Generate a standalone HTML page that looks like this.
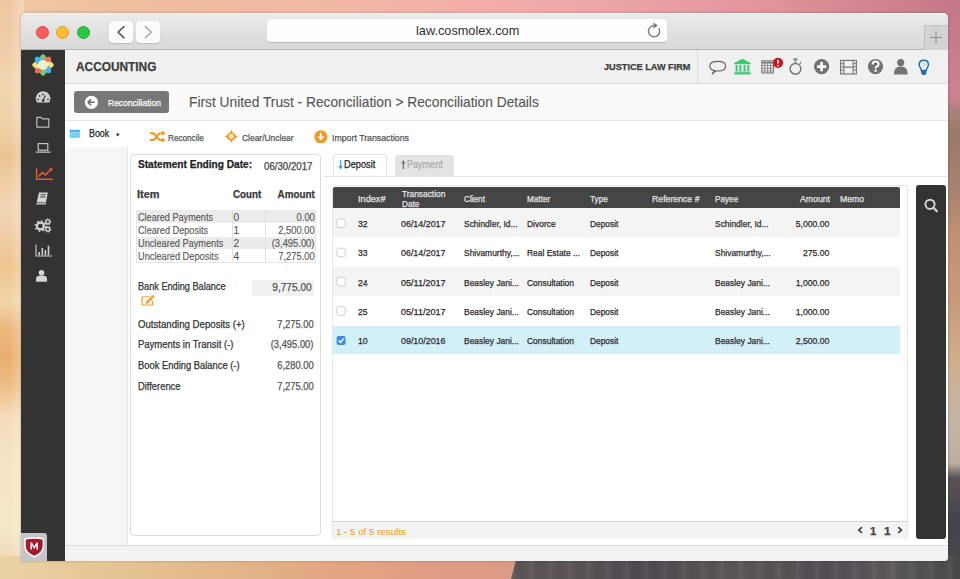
<!DOCTYPE html>
<html><head><meta charset="utf-8">
<style>
*{box-sizing:border-box;margin:0;padding:0}
html,body{width:960px;height:579px;overflow:hidden;font-family:"Liberation Sans",sans-serif;background:#e8b890;position:relative}
.a{position:absolute}
.t{position:absolute;white-space:nowrap;line-height:1;transform-origin:0 0;-webkit-text-stroke:0.25px currentColor}
svg{position:absolute;overflow:visible}
#bgtop{left:0;top:0;width:960px;height:16px;background:linear-gradient(90deg,#eec8a2 0%,#f0bea0 15%,#f2b8a4 35%,#f2aeaa 50%,#eba4a6 65%,#e2949c 80%,#d08290 92%,#c47888 100%)}
#bgleft{left:0;top:0;width:24px;height:579px;background:linear-gradient(90deg,rgba(255,250,235,0) 0%,rgba(255,250,235,0) 40%,rgba(255,250,235,.3) 88%),linear-gradient(180deg,#efc6a2 0%,#f0cca8 8%,#f2d6b0 14%,#f0d2aa 21%,#ecc292 27%,#f2d6b4 35%,#f0ceaa 40%,#eec48e 46%,#f0d4a8 52%,#ecb67c 57%,#eaae70 62%,#eebe88 67%,#f4dcba 72%,#f6e4c6 80%,#f6e6c8 92%,#ead0a2 100%)}
#bgright{left:944px;top:0;width:16px;height:579px;background:linear-gradient(180deg,#c47888 0%,#cc8290 17%,#a88078 19.5%,#9a7a6c 23%,#a88270 33%,#c09070 40%,#c89a78 52%,#d0ae8e 62%,#c6b6a6 72%,#bcaea2 80%,#5a5458 82.5%,#46424a 90%,#4a474c 100%)}
#bgbot{left:0;top:556px;width:960px;height:23px;background:linear-gradient(90deg,#ead2a4 0%,#e6c494 12%,#e2b488 25%,#e2a682 35%,#e09c84 45%,#dc9a86 54%)}
#rock{left:508px;top:556px;width:452px;height:23px;clip-path:polygon(9px 0,452px 0,452px 23px,3px 23px);background:repeating-linear-gradient(90deg,rgba(255,255,255,0) 0px,rgba(255,255,255,.05) 5px,rgba(255,255,255,0) 9px,rgba(0,0,0,.04) 14px,rgba(255,255,255,0) 19px),linear-gradient(90deg,#5c5658 0%,#5a5458 15%,#4e4a50 30%,#5a5658 50%,#524e54 70%,#5c585c 85%,#4a484c 100%)}
#win{left:21px;top:13px;width:927px;height:548px;border-radius:5px 5px 4px 0;overflow:hidden;background:#fff;box-shadow:0 0 3px rgba(0,0,0,.25)}
#pg{left:-21px;top:-13px;width:960px;height:579px}
#tb{left:21px;top:13px;width:927px;height:37px;background:linear-gradient(180deg,#ebebeb 0%,#d8d8d8 100%);border-bottom:1px solid #b6b6b6;box-shadow:inset 0 1px 0 #f6f2f2}
.tl{width:13px;height:13px;border-radius:50%;top:26px}
.nav{top:21px;width:24px;height:22px;background:#fbfbfb;border-radius:4px;box-shadow:0 0.5px 1px rgba(0,0,0,.15)}
#url{left:267px;top:19px;width:400px;height:23px;background:#fdfdfd;border-radius:4px;box-shadow:0 0.5px 1px rgba(0,0,0,.15)}
#plus{left:924px;top:25px;width:24px;height:25px;background:#d3d3d3;border-left:1px solid #bdbdbd;border-top:1px solid #c5c5c5}
#side{left:21px;top:50px;width:44px;height:511px;background:#333333}
#hdr{left:65px;top:50px;width:883px;height:34px;background:#f0f0f0;border-bottom:1px solid #dedede}
#sub{left:65px;top:84px;width:883px;height:37px;background:#fafafa;border-bottom:1px solid #e6e6e6}
#book{left:65px;top:147px;width:63px;height:398px;background:#f6f6f6;border-right:1px solid #e8e8e8}
#sum{left:130px;top:154px;width:191px;height:382px;border:1px solid #dcdcdc;border-radius:4px;background:#fff}
#foot{left:65px;top:545px;width:883px;height:16px;background:#f3f3f3;border-top:1px solid #dadada}
#grid{left:332px;top:185px;width:576px;height:354px;border:1px solid #e6e6e6;border-radius:3px;background:#fff}
#search{left:916px;top:185px;width:30px;height:354px;background:#333;border-radius:3px}
</style></head><body>
<div id="bgright" class="a"></div>
<div id="bgtop" class="a"></div>
<div id="bgleft" class="a"></div>
<div id="bgbot" class="a"></div>
<div id="rock" class="a"></div>
<div id="win" class="a"><div id="pg" class="a">
  <div id="tb" class="a"></div>
  <div class="a tl" style="left:35.5px;background:#fb5d58;border:0.5px solid #e0443f"></div>
  <div class="a tl" style="left:56px;background:#fdbc2f;border:0.5px solid #dea123"></div>
  <div class="a tl" style="left:77px;background:#2dc642;border:0.5px solid #1aab2b"></div>
  <div class="a nav" style="left:109px"></div>
  <div class="a nav" style="left:136px"></div>
  <div id="url" class="a"></div>
  <div id="plus" class="a"></div>
  <div id="side" class="a"></div>
  <div id="hdr" class="a"></div>
  <div id="sub" class="a"></div>
  <div id="book" class="a"></div>
  <div id="sum" class="a"></div>
  <div id="grid" class="a"></div>
  <div id="search" class="a"></div>
  <div id="foot" class="a"></div>

  <div class="a" style="left:74.4px;top:91.4px;width:94.6px;height:21.3px;background:#777777;border-radius:3px"></div>
  <div class="a" style="left:136px;top:210px;width:180.3px;height:53px;border:1px solid #e4e4e4;border-top-color:#ececec"></div>
  <div class="a" style="left:137px;top:210px;width:178.3px;height:13.2px;background:#ebebeb"></div>
  <div class="a" style="left:137px;top:237px;width:178.3px;height:12.4px;background:#ebebeb"></div>
  <div class="a" style="left:232px;top:211px;width:1px;height:51px;background:#e0e0e0"></div>
  <div class="a" style="left:265px;top:211px;width:1px;height:51px;background:#e0e0e0"></div>
  <div class="a" style="left:252px;top:279.6px;width:62.3px;height:16.1px;background:#f1f1f1"></div>
  <div class="a" style="left:324px;top:175.5px;width:624px;height:1px;background:#e2e2e2"></div>
  <div class="a" style="left:332.6px;top:154.1px;width:54.4px;height:22.4px;background:#fff;border:1px solid #e2e2e2;border-bottom:0;border-radius:3px 3px 0 0"></div>
  <div class="a" style="left:394.7px;top:154.6px;width:59.3px;height:21px;background:#e3e3e3;border-radius:3px 3px 0 0"></div>
  <div class="a" style="left:333px;top:186.7px;width:567px;height:21.3px;background:#454545;border-radius:2px 2px 0 0"></div>
  <div class="a" style="left:333px;top:208px;width:567px;height:29.3px;background:#f4f4f4"></div>
  <div class="a" style="left:333px;top:266.5px;width:567px;height:29.3px;background:#f4f4f4"></div>
  <div class="a" style="left:333px;top:325.8px;width:567px;height:28.7px;background:#d3eff8"></div>
  <div class="a" style="left:333px;top:520.5px;width:574px;height:18px;background:#f3f3f3;border-top:1.5px solid #d2d2d2;border-radius:0 0 3px 3px"></div>

<!-- nav chevrons -->
<svg style="left:0;top:0" width="960" height="579" viewBox="0 0 960 579">
  <path d="M124,26.6 L118,32.2 L124,37.8" fill="none" stroke="#5a5a5a" stroke-width="1.6" stroke-linecap="round" stroke-linejoin="round"/>
  <path d="M145.3,26.6 L151.3,32.2 L145.3,37.8" fill="none" stroke="#a8a8a8" stroke-width="1.5" stroke-linecap="round" stroke-linejoin="round"/>
  <path d="M658.8,28.2 A5.6,5.6 0 1 1 654,25.6" fill="none" stroke="#7a7a7a" stroke-width="1.4"/>
  <path d="M653.6,22.6 L657.8,25.6 L653.6,28.6 Z" fill="#7a7a7a"/>
  <path d="M930,37.5 H942 M936,31.5 V43.5" stroke="#8c8c8c" stroke-width="1"/>
</svg>
<!-- sidebar logo -->
<svg style="left:31px;top:53px" width="24" height="24" viewBox="-12 -12 24 24">
  <path d="M0,-1 C4.6,-3.5 4.6,-8.6 0,-11 C-4.6,-8.6 -4.6,-3.5 0,-1 Z" fill="#7cc77c" transform="rotate(0)"/>
  <path d="M0,-1 C4.6,-3.5 4.6,-8.6 0,-11 C-4.6,-8.6 -4.6,-3.5 0,-1 Z" fill="#ee6f52" transform="rotate(45)"/>
  <path d="M0,-1 C4.6,-3.5 4.6,-8.6 0,-11 C-4.6,-8.6 -4.6,-3.5 0,-1 Z" fill="#f4e27a" transform="rotate(90)"/>
  <path d="M0,-1 C4.6,-3.5 4.6,-8.6 0,-11 C-4.6,-8.6 -4.6,-3.5 0,-1 Z" fill="#42b6ea" transform="rotate(135)"/>
  <path d="M0,-1 C4.6,-3.5 4.6,-8.6 0,-11 C-4.6,-8.6 -4.6,-3.5 0,-1 Z" fill="#7cc77c" transform="rotate(180)"/>
  <path d="M0,-1 C4.6,-3.5 4.6,-8.6 0,-11 C-4.6,-8.6 -4.6,-3.5 0,-1 Z" fill="#ee6f52" transform="rotate(225)"/>
  <path d="M0,-1 C4.6,-3.5 4.6,-8.6 0,-11 C-4.6,-8.6 -4.6,-3.5 0,-1 Z" fill="#f4e27a" transform="rotate(270)"/>
  <path d="M0,-1 C4.6,-3.5 4.6,-8.6 0,-11 C-4.6,-8.6 -4.6,-3.5 0,-1 Z" fill="#42b6ea" transform="rotate(-45)"/>
  <circle cx="0" cy="0" r="5" fill="#eef0d2"/>
</svg>
<svg style="left:0;top:0" width="960" height="579" viewBox="0 0 960 579">
  <!-- gauge -->
  <path d="M37,102.6 A7.3,7.3 0 1 1 49.2,102.6 Z" fill="#d0d0d0"/>
  <circle cx="43.1" cy="100.6" r="1.4" fill="#333"/>
  <path d="M43.1,100.6 L45.4,95.6" stroke="#333" stroke-width="1.1"/>
  <circle cx="38.2" cy="99.4" r="0.85" fill="#333"/><circle cx="39.6" cy="95.9" r="0.85" fill="#333"/><circle cx="43.1" cy="94.4" r="0.85" fill="#333"/><circle cx="48" cy="99.4" r="0.85" fill="#333"/>
  <!-- folder -->
  <path d="M36.8,117.3 H41 L42.3,118.8 H48.8 V127.1 H36.8 Z" fill="none" stroke="#bdbdbd" stroke-width="1.2" stroke-linejoin="round"/>
  <!-- laptop -->
  <rect x="38.2" y="143.6" width="9.6" height="6.6" fill="none" stroke="#c4c4c4" stroke-width="1.2"/>
  <path d="M35.8,152.2 H50.6" stroke="#c4c4c4" stroke-width="1.3"/>
  <!-- chart orange -->
  <path d="M36.6,168.3 V179.2 H53" fill="none" stroke="#e2592b" stroke-width="1.5"/>
  <path d="M38.6,176.5 L42.5,172.3 L45.5,174.8 L51.5,169" fill="none" stroke="#e2592b" stroke-width="1.7" stroke-linejoin="round"/>
  <path d="M52.6,168 L48.8,168.6 L51.8,171.6 Z" fill="#e2592b"/>
  <!-- ledger -->
  <path d="M39,192.6 H47.8 L45.6,204.6 H36.2 Z" fill="#d6d6d6"/>
  <path d="M40.6,194.8 H45.8 M40.2,197 H45.4" stroke="#333" stroke-width="0.9"/>
  <path d="M36.4,202.8 H45.6" stroke="#333" stroke-width="0.8"/>
  <!-- gears -->
  <circle cx="40.4" cy="226" r="3.4" fill="none" stroke="#d2d2d2" stroke-width="2.2"/>
  <circle cx="40.4" cy="226" r="5.1" fill="none" stroke="#d2d2d2" stroke-width="1.6" stroke-dasharray="1.7 2.3"/>
  <circle cx="47.8" cy="221.8" r="1.9" fill="none" stroke="#d2d2d2" stroke-width="1.4"/>
  <circle cx="47.8" cy="221.8" r="3" fill="none" stroke="#d2d2d2" stroke-width="1.1" stroke-dasharray="1.2 1.4"/>
  <circle cx="47.8" cy="229.2" r="1.9" fill="none" stroke="#d2d2d2" stroke-width="1.4"/>
  <circle cx="47.8" cy="229.2" r="3" fill="none" stroke="#d2d2d2" stroke-width="1.1" stroke-dasharray="1.2 1.4"/>
  <!-- bar chart -->
  <path d="M36,244.5 V256 H52" fill="none" stroke="#cfcfcf" stroke-width="1.1"/>
  <path d="M39.2,252 V255.2 M42.3,248 V255.2 M45.4,250 V255.2 M48.5,245.8 V255.2" stroke="#cfcfcf" stroke-width="1.6"/>
  <!-- user -->
  <circle cx="41.5" cy="272.8" r="2.8" fill="#d6d6d6"/>
  <path d="M36,281.8 V279.2 Q36,275.8 39.5,275.8 H43.5 Q47,275.8 47,279.2 V281.8 Z" fill="#d6d6d6"/>
</svg>
<!-- mcafee -->
<div class="a" style="left:21px;top:533px;width:26px;height:28px;background:#c6c6c8;border-radius:0 3px 0 0"></div>
<svg style="left:0;top:0" width="960" height="579" viewBox="0 0 960 579">
  <path d="M24.3,538.2 Q34.2,536.2 44.1,538.2 V546 Q44.1,553.5 34.2,557.4 Q24.3,553.5 24.3,546 Z" fill="#fff"/>
  <path d="M25.8,539.6 Q34.2,537.9 42.6,539.6 V546 Q42.6,552.3 34.2,555.7 Q25.8,552.3 25.8,546 Z" fill="#a8162c"/>
  <path d="M30.4,549.6 V542.6 H32 L34.2,546.4 L36.4,542.6 H38 V549.6 H36.4 V545.5 L34.2,549 L32,545.5 V549.6 Z" fill="#fff"/>
</svg>

<!-- header icons -->
<svg style="left:0;top:0" width="960" height="579" viewBox="0 0 960 579">
  <path d="M697.5,50 V83" stroke="#dcdcdc" stroke-width="1"/>
  <!-- speech -->
  <path d="M714.5,70.6 Q709.8,69.4 709.8,66.2 Q709.8,61.4 717.8,61.4 Q725.6,61.4 725.6,66.2 Q725.6,71 717.8,71 Q716.8,71 716,70.9 L712.2,74 Z" fill="none" stroke="#666" stroke-width="1.2" stroke-linejoin="round"/>
  <!-- bank -->
  <g fill="#38cd73">
    <path d="M742.5,58.7 L750.8,63 V64.2 H734.2 V63 Z"/>
    <rect x="735.6" y="65" width="2" height="6.2"/><rect x="739.3" y="65" width="2" height="6.2"/><rect x="743.6" y="65" width="2" height="6.2"/><rect x="747.3" y="65" width="2" height="6.2"/>
    <rect x="734.6" y="71.6" width="15.8" height="1.2"/><rect x="734.2" y="73" width="16.6" height="1.4"/>
  </g>
  <!-- calendar -->
  <rect x="761.8" y="60.8" width="11.6" height="12.2" fill="none" stroke="#7a7a7a" stroke-width="1.1"/>
  <path d="M761.8,62.6 H773.4" stroke="#7a7a7a" stroke-width="1.6"/>
  <path d="M761.8,65.6 H773.4 M761.8,68.3 H773.4 M761.8,70.9 H773.4 M764.7,62.5 V73 M767.6,62.5 V73 M770.5,62.5 V73" stroke="#7a7a7a" stroke-width="0.8"/>
  <circle cx="778" cy="62.8" r="5.1" fill="#d3101f"/>
  <path d="M778,59.8 V63.6" stroke="#fff" stroke-width="1.7"/><circle cx="778" cy="65.6" r="0.9" fill="#fff"/>
  <!-- stopwatch -->
  <circle cx="795.5" cy="68.8" r="5.4" fill="none" stroke="#777" stroke-width="1.5"/>
  <path d="M795.5,63.4 V60.6" stroke="#777" stroke-width="1.4"/><path d="M793.4,59.4 H797.6" stroke="#777" stroke-width="1.6"/>
  <path d="M799.8,63.6 L801.2,62.2" stroke="#777" stroke-width="1.2"/>
  <!-- plus circle -->
  <circle cx="821.6" cy="66.6" r="7.6" fill="#727272"/>
  <path d="M817,66.6 H826.2 M821.6,62 V71.2" stroke="#fff" stroke-width="2.6"/>
  <!-- film -->
  <rect x="840.6" y="60.4" width="15.8" height="13.6" fill="none" stroke="#7a7a7a" stroke-width="1.2"/>
  <path d="M843.8,60.4 V74 M853.2,60.4 V74 M843.8,67.2 H853.2" stroke="#7a7a7a" stroke-width="1.2"/>
  <path d="M840.6,63.6 H843.8 M840.6,66.8 H843.8 M840.6,70 H843.8 M853.2,63.6 H856.4 M853.2,66.8 H856.4 M853.2,70 H856.4" stroke="#7a7a7a" stroke-width="1"/>
  <!-- question -->
  <circle cx="875.5" cy="66.6" r="7.6" fill="#727272"/>
  <path d="M872.6,64.6 Q872.6,61.6 875.6,61.6 Q878.6,61.6 878.6,64.2 Q878.6,65.8 876.6,66.6 Q875.6,67.1 875.6,68.4" fill="none" stroke="#fff" stroke-width="2"/>
  <rect x="874.5" y="69.6" width="2.2" height="2.2" fill="#fff"/>
  <!-- user -->
  <circle cx="900.7" cy="62.6" r="3.6" fill="#727272"/>
  <path d="M894,73.2 Q894,66.4 900.8,66.4 Q907.6,66.4 907.6,73.2 Q907.6,74.4 906.4,74.4 H895.2 Q894,74.4 894,73.2 Z" fill="#727272"/>
  <!-- bulb -->
  <path d="M921.3,70.6 Q921.2,68.8 920.1,67.4 Q919.2,66.2 919.2,64.6 Q919.2,60.3 923.8,60.3 Q928.4,60.3 928.4,64.6 Q928.4,66.2 927.5,67.4 Q926.4,68.8 926.3,70.6 Z" fill="none" stroke="#1b70b0" stroke-width="1.5"/>
  <path d="M921.2,70.4 H926.4 V72.4 Q926.4,75 923.8,75 Q921.2,75 921.2,72.4 Z" fill="#1b70b0"/>
  <path d="M922.4,62.6 L924.6,64.4 L923.2,65.6" fill="none" stroke="#5aa0d0" stroke-width="0.7"/>
  <!-- reconciliation button circle -->
  <circle cx="91.4" cy="102.3" r="6.6" fill="#fff"/>
  <path d="M88.2,102.3 H94.8 M91,99.3 L88,102.3 L91,105.3" fill="none" stroke="#6a6a6a" stroke-width="1.6" stroke-linejoin="round"/>
  <!-- book icon -->
  <rect x="69.7" y="129.9" width="10.1" height="7.9" fill="#6fcdf2"/>
  <rect x="69.7" y="129.9" width="10.1" height="1.8" fill="#3fb4e8"/>
  <path d="M71,133 H78.5 M71,135 H76" stroke="#a8e2f8" stroke-width="0.7"/>
  <path d="M116.7,132.8 L119.9,134.6 L116.7,136.4 Z" fill="#333"/>
  <!-- reconcile shuffle -->
  <g fill="none" stroke="#ef9a1e" stroke-width="2" stroke-linejoin="round">
    <path d="M149.8,133.2 H152.4 Q154.8,133.2 156.6,136.6 Q158.4,140 160.8,140 H163"/>
    <path d="M149.8,140 H152.4 Q154.8,140 156.6,136.6 Q158.4,133.2 160.8,133.2 H163"/>
  </g>
  <path d="M162,130.6 L165.6,133.2 L162,135.8 Z M162,137.4 L165.6,140 L162,142.6 Z" fill="#ef9a1e"/>
  <!-- clear/unclear crosshair -->
  <path d="M231.3,129.8 Q232.6,133.6 234.3,133.4 Q235.2,135.4 237.9,136.4 Q235.2,137.4 234.3,139.4 Q232.6,139.2 231.3,143 Q230,139.2 228.3,139.4 Q227.4,137.4 224.7,136.4 Q227.4,135.4 228.3,133.4 Q230,133.6 231.3,129.8 Z" fill="#ef9e22"/>
  <path d="M231.3,132.6 L235.1,136.4 L231.3,140.2 L227.5,136.4 Z" fill="#ef9e22"/>
  <circle cx="231.3" cy="136.4" r="2.3" fill="#fff"/>
  <path d="M230,135.1 L232.6,137.7 M232.6,135.1 L230,137.7" stroke="#f6c878" stroke-width="0.8"/>
  <!-- import -->
  <circle cx="320.8" cy="136.8" r="6.5" fill="#ef9a1e"/>
  <path d="M320.8,132.8 V137.6" stroke="#fff" stroke-width="2"/>
  <path d="M317.2,136.4 L320.8,140.6 L324.4,136.4 Z" fill="#fff"/>
  <!-- edit icon -->
  <path d="M150,296.8 H142.2 V305 H152.6 V300.4" fill="none" stroke="#f0a030" stroke-width="1.1"/>
  <path d="M146.2,301.6 L153,294.8 L154.8,296.6 L148,303.4 L145.6,304 Z" fill="#f0a030"/>
  <!-- tab arrows -->
  <path d="M340.6,160 V168.4" stroke="#3aaed8" stroke-width="1.4"/>
  <path d="M338.4,166 L340.6,169.4 L342.8,166 Z" fill="#3aaed8"/>
  <path d="M403.4,162 V169" stroke="#777" stroke-width="1.4"/>
  <path d="M401.2,163.4 L403.4,160 L405.6,163.4 Z" fill="#777"/>
  <!-- search -->
  <circle cx="930" cy="204.3" r="4.6" fill="none" stroke="#d2d2d2" stroke-width="2"/>
  <path d="M933.4,207.7 L936.8,211.1" stroke="#d2d2d2" stroke-width="2.2" stroke-linecap="round"/>
  <!-- pager -->
  <path d="M862,527.2 L858.8,530 L862,532.8 M898.2,527.2 L901.4,530 L898.2,532.8" fill="none" stroke="#444" stroke-width="1.7"/>
</svg>
<svg style="left:0;top:0" width="960" height="579" viewBox="0 0 960 579">
  <rect x="336.9" y="218.90" width="8.4" height="8.6" rx="1.8" fill="#fff" stroke="#c9c9c9" stroke-width="0.9"/>
  <rect x="336.9" y="248.15" width="8.4" height="8.6" rx="1.8" fill="#fff" stroke="#c9c9c9" stroke-width="0.9"/>
  <rect x="336.9" y="277.40" width="8.4" height="8.6" rx="1.8" fill="#fff" stroke="#c9c9c9" stroke-width="0.9"/>
  <rect x="336.9" y="306.65" width="8.4" height="8.6" rx="1.8" fill="#fff" stroke="#c9c9c9" stroke-width="0.9"/>
  <rect x="336.6" y="335.90" width="9" height="9" rx="2" fill="#3b8de8"/>
  <path d="M338.6,340.50 L340.6,342.50 L343.8,338.30" fill="none" stroke="#fff" stroke-width="1.4"/>
</svg>
<div class="t" style="top:24.09px;font-size:13px;color:#303030;left:416.00px;-webkit-text-stroke:0px currentColor;transform:scaleX(0.9793);">law.cosmolex.com</div>
<div class="t" style="top:61.36px;font-size:12.8px;color:#3c3c3c;font-weight:700;left:75.60px;transform:scaleX(0.9270);">ACCOUNTING</div>
<div class="t" style="top:61.80px;font-size:9.8px;color:#3c3c3c;font-weight:700;left:603.50px;transform:scaleX(0.9348);">JUSTICE LAW FIRM</div>
<div class="t" style="top:97.69px;font-size:9.7px;color:#ffffff;left:107.50px;transform:scaleX(0.8771);">Reconciliation</div>
<div class="t" style="top:95.16px;font-size:14.1px;color:#555555;left:189.00px;-webkit-text-stroke:0.1px currentColor;transform:scaleX(0.9761);">First United Trust - Reconciliation &gt; Reconciliation Details</div>
<div class="t" style="top:129.23px;font-size:10.0px;color:#222222;left:88.70px;transform:scaleX(0.8861);">Book</div>
<div class="t" style="top:133.27px;font-size:9.6px;color:#555555;left:168.30px;transform:scaleX(0.8519);">Reconcile</div>
<div class="t" style="top:133.27px;font-size:9.6px;color:#555555;left:241.70px;transform:scaleX(0.8797);">Clear/Unclear</div>
<div class="t" style="top:133.27px;font-size:9.6px;color:#555555;left:331.70px;transform:scaleX(0.9139);">Import Transactions</div>
<div class="t" style="top:160.16px;font-size:10.2px;color:#222222;font-weight:700;left:138.00px;transform:scaleX(0.9921);">Statement Ending Date:</div>
<div class="t" style="top:161.86px;font-size:10.2px;color:#444444;left:264.00px;transform:scaleX(0.9510);">06/30/2017</div>
<div class="t" style="top:190.13px;font-size:10.0px;color:#3a3a3a;font-weight:700;left:137.20px;transform:scaleX(1.0894);">Item</div>
<div class="t" style="top:190.13px;font-size:10.0px;color:#3a3a3a;font-weight:700;left:233.00px;transform:scaleX(0.9761);">Count</div>
<div class="t" style="top:190.13px;font-size:10.0px;color:#3a3a3a;font-weight:700;left:277.22px;transform-origin:100% 0;transform:scaleX(0.9846);">Amount</div>
<div class="t" style="top:213.36px;font-size:10.2px;color:#555555;left:137.80px;-webkit-text-stroke:0.12px currentColor;transform:scaleX(0.8949);">Cleared Payments</div>
<div class="t" style="top:213.36px;font-size:10.2px;color:#555555;left:233.60px;-webkit-text-stroke:0.12px currentColor;">0</div>
<div class="t" style="top:213.36px;font-size:10.2px;color:#555555;left:294.97px;transform-origin:100% 0;-webkit-text-stroke:0.12px currentColor;transform:scaleX(0.9200);">0.00</div>
<div class="t" style="top:226.36px;font-size:10.2px;color:#555555;left:137.80px;-webkit-text-stroke:0.12px currentColor;transform:scaleX(0.8982);">Cleared Deposits</div>
<div class="t" style="top:226.36px;font-size:10.2px;color:#555555;left:233.60px;-webkit-text-stroke:0.12px currentColor;">1</div>
<div class="t" style="top:226.36px;font-size:10.2px;color:#555555;left:275.14px;transform-origin:100% 0;-webkit-text-stroke:0.12px currentColor;transform:scaleX(0.9200);">2,500.00</div>
<div class="t" style="top:239.36px;font-size:10.2px;color:#555555;left:137.80px;-webkit-text-stroke:0.12px currentColor;transform:scaleX(0.9030);">Uncleared Payments</div>
<div class="t" style="top:239.36px;font-size:10.2px;color:#555555;left:233.60px;-webkit-text-stroke:0.12px currentColor;">2</div>
<div class="t" style="top:239.36px;font-size:10.2px;color:#555555;left:268.35px;transform-origin:100% 0;-webkit-text-stroke:0.12px currentColor;transform:scaleX(0.9200);">(3,495.00)</div>
<div class="t" style="top:252.36px;font-size:10.2px;color:#555555;left:137.80px;-webkit-text-stroke:0.12px currentColor;transform:scaleX(0.9054);">Uncleared Deposits</div>
<div class="t" style="top:252.36px;font-size:10.2px;color:#555555;left:233.60px;-webkit-text-stroke:0.12px currentColor;">4</div>
<div class="t" style="top:252.36px;font-size:10.2px;color:#555555;left:275.14px;transform-origin:100% 0;-webkit-text-stroke:0.12px currentColor;transform:scaleX(0.9200);">7,275.00</div>
<div class="t" style="top:281.76px;font-size:10.2px;color:#333333;left:138.20px;transform:scaleX(0.8982);">Bank Ending Balance</div>
<div class="t" style="top:283.46px;font-size:10.2px;color:#555555;left:272.44px;transform-origin:100% 0;transform:scaleX(0.9935);">9,775.00</div>
<div class="t" style="top:319.66px;font-size:10.2px;color:#333333;left:138.20px;transform:scaleX(0.9454);">Outstanding Deposits (+)</div>
<div class="t" style="top:319.66px;font-size:10.2px;color:#555555;left:273.94px;transform-origin:100% 0;transform:scaleX(0.9200);">7,275.00</div>
<div class="t" style="top:340.46px;font-size:10.2px;color:#333333;left:138.20px;transform:scaleX(0.9310);">Payments in Transit (-)</div>
<div class="t" style="top:340.46px;font-size:10.2px;color:#555555;left:267.15px;transform-origin:100% 0;transform:scaleX(0.9200);">(3,495.00)</div>
<div class="t" style="top:361.16px;font-size:10.2px;color:#333333;left:138.20px;transform:scaleX(0.9200);">Book Ending Balance (-)</div>
<div class="t" style="top:361.16px;font-size:10.2px;color:#555555;left:273.94px;transform-origin:100% 0;transform:scaleX(0.9200);">6,280.00</div>
<div class="t" style="top:381.86px;font-size:10.2px;color:#333333;left:138.20px;transform:scaleX(0.9189);">Difference</div>
<div class="t" style="top:381.86px;font-size:10.2px;color:#555555;left:273.94px;transform-origin:100% 0;transform:scaleX(0.9200);">7,275.00</div>
<div class="t" style="top:159.23px;font-size:10.6px;color:#222222;left:344.00px;transform:scaleX(0.8713);">Deposit</div>
<div class="t" style="top:159.23px;font-size:10.6px;color:#aaaaaa;left:406.60px;transform:scaleX(0.8538);">Payment</div>
<div class="t" style="top:195.33px;font-size:9.3px;color:#e6e6e6;left:357.50px;transform:scaleX(0.9849);">Index#</div>
<div class="t" style="top:190.33px;font-size:9.3px;color:#e6e6e6;left:401.70px;transform:scaleX(0.8977);">Transaction</div>
<div class="t" style="top:200.03px;font-size:9.3px;color:#e6e6e6;left:401.70px;transform:scaleX(0.8800);">Date</div>
<div class="t" style="top:195.33px;font-size:9.3px;color:#e6e6e6;left:464.20px;transform:scaleX(0.8800);">Client</div>
<div class="t" style="top:195.33px;font-size:9.3px;color:#e6e6e6;left:526.70px;transform:scaleX(0.8800);">Matter</div>
<div class="t" style="top:195.33px;font-size:9.3px;color:#e6e6e6;left:589.80px;transform:scaleX(0.8800);">Type</div>
<div class="t" style="top:195.33px;font-size:9.3px;color:#e6e6e6;left:651.70px;transform:scaleX(0.9377);">Reference #</div>
<div class="t" style="top:195.33px;font-size:9.3px;color:#e6e6e6;left:714.70px;transform:scaleX(0.8800);">Payee</div>
<div class="t" style="top:195.33px;font-size:9.3px;color:#e6e6e6;left:797.75px;transform-origin:100% 0;transform:scaleX(0.9361);">Amount</div>
<div class="t" style="top:195.33px;font-size:9.3px;color:#e6e6e6;left:839.70px;transform:scaleX(0.9287);">Memo</div>
<div class="t" style="top:219.07px;font-size:9.6px;color:#2a2a2a;left:357.50px;transform:scaleX(0.9000);">32</div>
<div class="t" style="top:219.07px;font-size:9.6px;color:#2a2a2a;left:401.30px;transform:scaleX(0.9268);">06/14/2017</div>
<div class="t" style="top:219.07px;font-size:9.6px;color:#2a2a2a;left:463.50px;transform:scaleX(0.8800);">Schindler, Id...</div>
<div class="t" style="top:219.07px;font-size:9.6px;color:#2a2a2a;left:526.70px;transform:scaleX(0.8800);">Divorce</div>
<div class="t" style="top:219.07px;font-size:9.6px;color:#2a2a2a;left:589.60px;transform:scaleX(0.8730);">Deposit</div>
<div class="t" style="top:219.07px;font-size:9.6px;color:#2a2a2a;left:714.70px;transform:scaleX(0.8800);">Schindler, Id...</div>
<div class="t" style="top:219.07px;font-size:9.6px;color:#2a2a2a;left:792.44px;transform-origin:100% 0;transform:scaleX(0.9000);">5,000.00</div>
<div class="t" style="top:248.32px;font-size:9.6px;color:#2a2a2a;left:357.50px;transform:scaleX(0.9000);">33</div>
<div class="t" style="top:248.32px;font-size:9.6px;color:#2a2a2a;left:401.30px;transform:scaleX(0.9268);">06/14/2017</div>
<div class="t" style="top:248.32px;font-size:9.6px;color:#2a2a2a;left:463.50px;transform:scaleX(0.8800);">Shivamurthy,...</div>
<div class="t" style="top:248.32px;font-size:9.6px;color:#2a2a2a;left:526.70px;transform:scaleX(0.8800);">Real Estate ...</div>
<div class="t" style="top:248.32px;font-size:9.6px;color:#2a2a2a;left:589.60px;transform:scaleX(0.8730);">Deposit</div>
<div class="t" style="top:248.32px;font-size:9.6px;color:#2a2a2a;left:714.70px;transform:scaleX(0.8800);">Shivamurthy,...</div>
<div class="t" style="top:248.32px;font-size:9.6px;color:#2a2a2a;left:800.46px;transform-origin:100% 0;transform:scaleX(0.9000);">275.00</div>
<div class="t" style="top:277.57px;font-size:9.6px;color:#2a2a2a;left:357.50px;transform:scaleX(0.9000);">24</div>
<div class="t" style="top:277.57px;font-size:9.6px;color:#2a2a2a;left:401.30px;transform:scaleX(0.9406);">05/11/2017</div>
<div class="t" style="top:277.57px;font-size:9.6px;color:#2a2a2a;left:463.50px;transform:scaleX(0.8800);">Beasley Jani...</div>
<div class="t" style="top:277.57px;font-size:9.6px;color:#2a2a2a;left:526.70px;transform:scaleX(0.8800);">Consultation</div>
<div class="t" style="top:277.57px;font-size:9.6px;color:#2a2a2a;left:589.60px;transform:scaleX(0.8730);">Deposit</div>
<div class="t" style="top:277.57px;font-size:9.6px;color:#2a2a2a;left:714.70px;transform:scaleX(0.8800);">Beasley Jani...</div>
<div class="t" style="top:277.57px;font-size:9.6px;color:#2a2a2a;left:792.44px;transform-origin:100% 0;transform:scaleX(0.9000);">1,000.00</div>
<div class="t" style="top:306.82px;font-size:9.6px;color:#2a2a2a;left:357.50px;transform:scaleX(0.9000);">25</div>
<div class="t" style="top:306.82px;font-size:9.6px;color:#2a2a2a;left:401.30px;transform:scaleX(0.9406);">05/11/2017</div>
<div class="t" style="top:306.82px;font-size:9.6px;color:#2a2a2a;left:463.50px;transform:scaleX(0.8800);">Beasley Jani...</div>
<div class="t" style="top:306.82px;font-size:9.6px;color:#2a2a2a;left:526.70px;transform:scaleX(0.8800);">Consultation</div>
<div class="t" style="top:306.82px;font-size:9.6px;color:#2a2a2a;left:589.60px;transform:scaleX(0.8730);">Deposit</div>
<div class="t" style="top:306.82px;font-size:9.6px;color:#2a2a2a;left:714.70px;transform:scaleX(0.8800);">Beasley Jani...</div>
<div class="t" style="top:306.82px;font-size:9.6px;color:#2a2a2a;left:792.44px;transform-origin:100% 0;transform:scaleX(0.9000);">1,000.00</div>
<div class="t" style="top:336.07px;font-size:9.6px;color:#2a2a2a;left:357.50px;transform:scaleX(0.9000);">10</div>
<div class="t" style="top:336.07px;font-size:9.6px;color:#2a2a2a;left:401.30px;transform:scaleX(0.9268);">09/10/2016</div>
<div class="t" style="top:336.07px;font-size:9.6px;color:#2a2a2a;left:463.50px;transform:scaleX(0.8800);">Beasley Jani...</div>
<div class="t" style="top:336.07px;font-size:9.6px;color:#2a2a2a;left:526.70px;transform:scaleX(0.8800);">Consultation</div>
<div class="t" style="top:336.07px;font-size:9.6px;color:#2a2a2a;left:589.60px;transform:scaleX(0.8730);">Deposit</div>
<div class="t" style="top:336.07px;font-size:9.6px;color:#2a2a2a;left:714.70px;transform:scaleX(0.8800);">Beasley Jani...</div>
<div class="t" style="top:336.07px;font-size:9.6px;color:#2a2a2a;left:792.44px;transform-origin:100% 0;transform:scaleX(0.9000);">2,500.00</div>
<div class="t" style="top:525.56px;font-size:11.5px;color:#444444;font-weight:700;left:870.40px;transform:scaleX(0.9834);">1</div>
<div class="t" style="top:525.56px;font-size:11.5px;color:#444444;font-weight:700;left:883.80px;transform:scaleX(1.0302);">1</div>
<div class="t" style="top:526.87px;font-size:9.6px;color:#f0a233;left:336.00px;-webkit-text-stroke:0.1px currentColor;transform:scaleX(1.0146);">1 - 5 of 5 results</div>
</div></div>
</body></html>
